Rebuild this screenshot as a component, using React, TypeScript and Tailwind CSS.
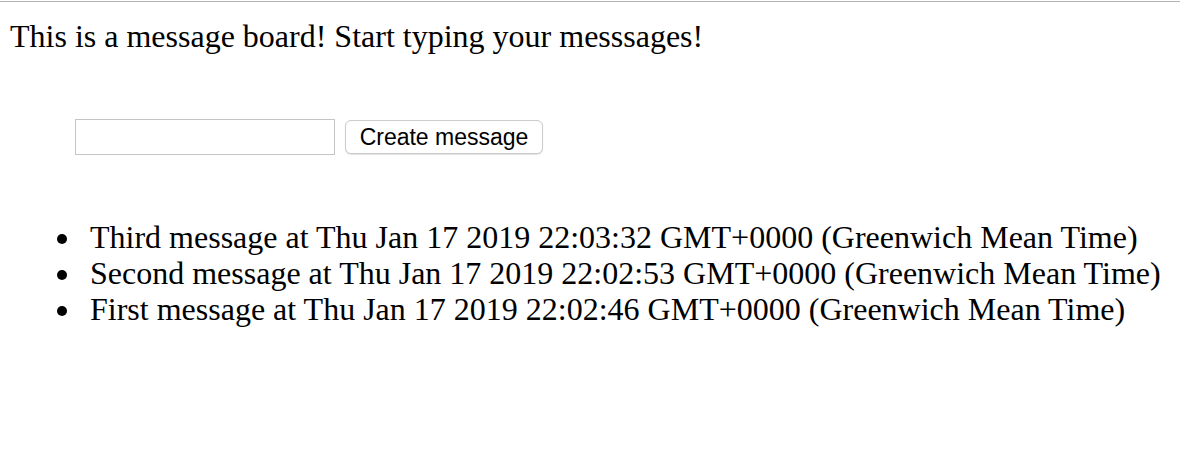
import React from "react";

const messages = [
  "Third message at Thu Jan 17 2019 22:03:32 GMT+0000 (Greenwich Mean Time)",
  "Second message at Thu Jan 17 2019 22:02:53 GMT+0000 (Greenwich Mean Time)",
  "First message at Thu Jan 17 2019 22:02:46 GMT+0000 (Greenwich Mean Time)",
];

export default function App() {
  return (
    <div className="min-h-screen bg-white">
      <div className="mt-px h-px bg-[#b3b3b3]" />
      <div className="pl-[10px] pt-[16px] font-['Liberation_Serif','Times_New_Roman',serif] text-[32px] leading-[36px] text-black">
        <p>This is a message board! Start typing your messsages!</p>
        <form
          className="ml-[65px] mt-[65px] flex items-center gap-[10px]"
          onSubmit={(e) => e.preventDefault()}
        >
          <input
            type="text"
            className="h-[36px] w-[260px] border border-[#c4c4c4] bg-white px-1 outline-none"
          />
          <button
            type="submit"
            className="h-[34px] w-[198px] rounded-[6px] border border-[#cbcbcb] bg-white pt-px font-['Liberation_Sans',Arial,sans-serif] text-[23px] leading-none text-black shadow-[0_1px_1px_rgba(0,0,0,0.12)]"
          >
            Create message
          </button>
        </form>
        <ul className="mt-[64px]">
          {messages.map((m) => (
            <li key={m} className="flex items-start">
              <span className="ml-[47px] mr-[23px] mt-[15px] h-[10px] w-[10px] shrink-0 rounded-full bg-black" />
              <span className="whitespace-nowrap">{m}</span>
            </li>
          ))}
        </ul>
      </div>
    </div>
  );
}
